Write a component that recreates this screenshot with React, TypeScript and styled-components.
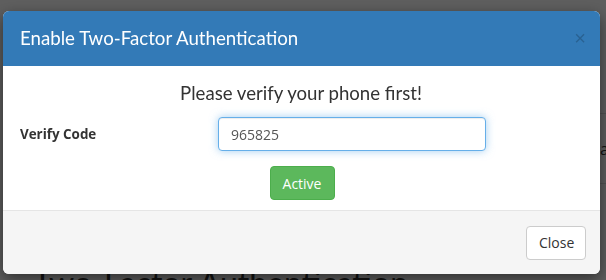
import styled, { createGlobalStyle } from "styled-components";

const GlobalStyle = createGlobalStyle`
  html, body {
    margin: 0;
    padding: 0;
    background: #ffffff;
    font-family: "Open Sans", "Liberation Sans", sans-serif;
    color: #333333;
    overflow: hidden;
  }
  * {
    box-sizing: border-box;
  }
`;

// page behind the modal
const Page = styled.div`
  width: 606px;
  height: 280px;
  padding: 0 0 0 33px;
  display: flex;
  flex-direction: column;
  overflow: hidden;
`;

const Table = styled.div`
  margin-top: 113px;
  display: flex;
  flex-direction: column;
  margin-left: 540px;
  width: 200px;
`;

const TableRow = styled.div<{ height: number }>`
  height: ${(props) => props.height}px;
  border-top: 1px solid #dddddd;
  display: flex;
  align-items: center;
  padding-left: 27px;
  font-size: 16px;
`;

const PageTitle = styled.h1`
  margin: 0;
  margin-top: auto;
  font-family: Lato, "Open Sans", sans-serif;
  font-weight: 400;
  font-size: 32px;
  line-height: 1;
  white-space: nowrap;
  transform: translateY(19px);
`;

const Backdrop = styled.div`
  position: fixed;
  inset: 0;
  background: rgba(0, 0, 0, 0.63);
`;

const Dialog = styled.div`
  position: fixed;
  top: 11px;
  left: 3px;
  width: 597px;
  background: #ffffff;
  border-radius: 6px;
  overflow: hidden;
  box-shadow: 0 5px 15px rgba(0, 0, 0, 0.5);
  display: flex;
  flex-direction: column;
`;

const Header = styled.div`
  height: 55px;
  background: #337ab7;
  display: flex;
  align-items: center;
  justify-content: space-between;
  padding: 0 14px 2px 17px;
`;

const Title = styled.h4`
  margin: 0;
  font-family: Lato, "Open Sans", sans-serif;
  font-weight: 400;
  font-size: 18.7px;
  color: #ffffff;
`;

const CloseX = styled.button`
  border: 0;
  background: none;
  padding: 0;
  font-family: "Liberation Sans", sans-serif;
  font-size: 20px;
  font-weight: 400;
  line-height: 1;
  color: #000000;
  opacity: 0.2;
  cursor: pointer;
`;

const Body = styled.div`
  height: 144px;
  padding: 14px 20px 10px 17px;
  display: flex;
  flex-direction: column;
  align-items: center;
`;

const Notice = styled.div`
  font-family: Lato, "Open Sans", sans-serif;
  font-size: 18.6px;
  line-height: 26px;
  color: #333333;
  padding-left: 2px;
`;

const FormRow = styled.div`
  margin-top: 11px;
  width: 100%;
  display: grid;
  grid-template-columns: 198px 268px;
  align-items: center;
`;

const Label = styled.label`
  font-weight: 700;
  font-size: 13.4px;
`;

const Input = styled.input`
  height: 34px;
  width: 268px;
  padding: 6px 12px;
  font-family: "Open Sans", "Liberation Sans", sans-serif;
  font-size: 14px;
  color: #555555;
  border: 1px solid #66afe9;
  border-radius: 4px;
  outline: 0;
  box-shadow: inset 0 1px 1px rgba(0, 0, 0, 0.075),
    0 0 8px rgba(102, 175, 233, 0.6);
`;

const Button = styled.button<{ variant: "success" | "default" }>`
  height: 34px;
  padding: 0 12px;
  font-family: "Open Sans", "Liberation Sans", sans-serif;
  font-size: 14px;
  border-radius: 4px;
  cursor: pointer;
  color: ${(props) => (props.variant === "success" ? "#ffffff" : "#333333")};
  background: ${(props) => (props.variant === "success" ? "#5cb85c" : "#ffffff")};
  border: 1px solid
    ${(props) => (props.variant === "success" ? "#4cae4c" : "#cccccc")};
`;

const ActiveButton = styled(Button)`
  margin-top: 15px;
  width: 65px;
  margin-left: 4px;
`;

const Footer = styled.div`
  height: 64px;
  border-top: 1px solid #e5e5e5;
  background: #f5f5f5;
  display: flex;
  align-items: center;
  justify-content: flex-end;
  padding: 0 14px 0 15px;
`;

const CloseButton = styled(Button)`
  width: 60px;
`;

const App = () => {
  return (
    <>
      <GlobalStyle />
      <Page>
        <Table>
          <TableRow height={70}>aa</TableRow>
          <TableRow height={40}> </TableRow>
        </Table>
        <PageTitle>Two-Factor Authentication</PageTitle>
      </Page>
      <Backdrop />
      <Dialog>
        <Header>
          <Title>Enable Two-Factor Authentication</Title>
          <CloseX>×</CloseX>
        </Header>
        <Body>
          <Notice>Please verify your phone first!</Notice>
          <FormRow>
            <Label>Verify Code</Label>
            <Input defaultValue="965825" />
          </FormRow>
          <ActiveButton variant="success">Active</ActiveButton>
        </Body>
        <Footer>
          <CloseButton variant="default">Close</CloseButton>
        </Footer>
      </Dialog>
    </>
  );
};

export default App;
